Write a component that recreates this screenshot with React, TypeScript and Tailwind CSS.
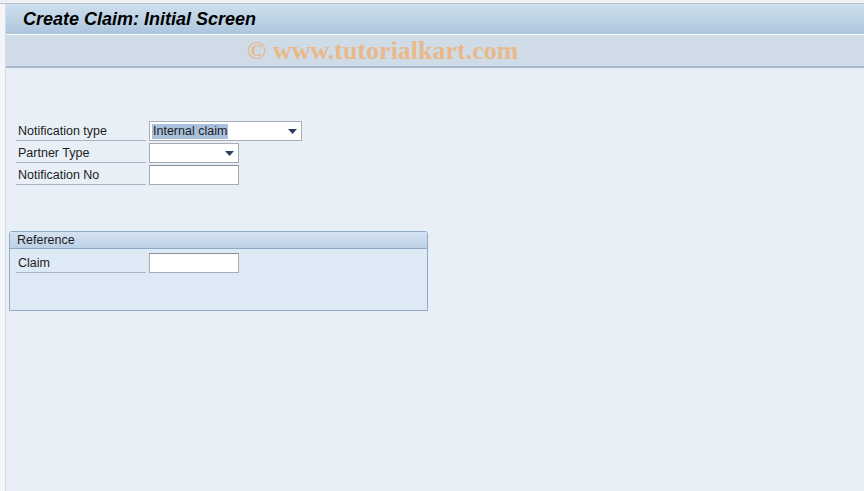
import React from 'react';

function Caret() {
  return (
    <svg width="9" height="5" viewBox="0 0 9 5" className="shrink-0">
      <path d="M0 0 H9 L4.5 5 Z" fill="#2b3f63" />
    </svg>
  );
}

function FieldRow({ label, children }: { label: string; children: React.ReactNode }) {
  return (
    <div className="flex items-center h-[22px]">
      <div className="w-[130px] h-[20px] ml-[10px] mr-[3px] pl-[2px] pt-[2px] flex items-center border-b border-[#a8b4c2] text-[12.5px] text-[#1d1d1d]">
        {label}
      </div>
      {children}
    </div>
  );
}

function Input({ width }: { width: string }) {
  return <div className={`${width} h-[20px] bg-white border border-[#a8acb3] border-t-[#8c9096]`} />;
}

export default function App() {
  return (
    <div className="w-[864px] h-[491px] bg-[#f3f5f8] flex flex-col overflow-hidden" style={{ fontFamily: '"Liberation Sans", Arial, sans-serif' }}>
      <div className="h-[4px] bg-[#eef0f4] border-b border-[#b9c3cf]" />
      <div className="flex-1 flex ml-[5px] border-l border-[#d5dbe3] flex-col">
        <div className="h-[31px] bg-gradient-to-b from-[#cfe0ee] to-[#adc4dc] border-b border-white flex items-center pl-[17px]">
          <span className="text-[18px] font-bold italic text-black">
            Create Claim: Initial Screen
          </span>
        </div>
        <div className="h-[33px] bg-[#cfdce7] border-b-2 border-[#a9b8ca] flex items-center pl-[241px]">
          <span className="text-[26px] leading-[28px] font-bold text-[#e9b98a]" style={{ fontFamily: '"Liberation Serif", "Times New Roman", serif' }}>
            © www.tutorialkart.com
          </span>
        </div>
        <div className="flex-1 bg-[#e8eff7] pt-[52px]">
          <FieldRow label="Notification type">
            <div className="w-[153px] h-[20px] bg-white border border-[#a8acb3] flex items-center pl-[2px] pr-[4px] justify-between">
              <span className="bg-[#a9c0dc] text-[12.5px] leading-[15px] px-[1px] text-[#1d1d1d]">Internal claim</span>
              <Caret />
            </div>
          </FieldRow>
          <FieldRow label="Partner Type">
            <div className="w-[90px] h-[20px] bg-white border border-[#a8acb3] flex items-center justify-end pr-[4px]">
              <Caret />
            </div>
          </FieldRow>
          <FieldRow label="Notification No">
            <Input width="w-[90px]" />
          </FieldRow>

          <div className="mt-[45px] ml-[3px] w-[419px] h-[80px] border border-[#8fa9c8] rounded-tr-[3px] rounded-tl-[3px] bg-[#dde9f4] flex flex-col">
            <div className="h-[17px] bg-gradient-to-b from-[#d5e3f1] to-[#bcd0e6] border-b border-[#8fa9c8] flex items-center pl-[7px] text-[12.5px] text-[#1d1d1d]">
              Reference
            </div>
            <div className="pt-[4px] -ml-[4px]">
              <div className="flex items-center h-[20px]">
                <div className="w-[130px] h-[20px] ml-[10px] mr-[3px] pl-[2px] pt-[2px] flex items-center border-b border-[#a8b4c2] text-[12.5px] text-[#1d1d1d]">
                  Claim
                </div>
                <Input width="w-[90px]" />
              </div>
            </div>
          </div>
        </div>
      </div>
    </div>
  );
}
